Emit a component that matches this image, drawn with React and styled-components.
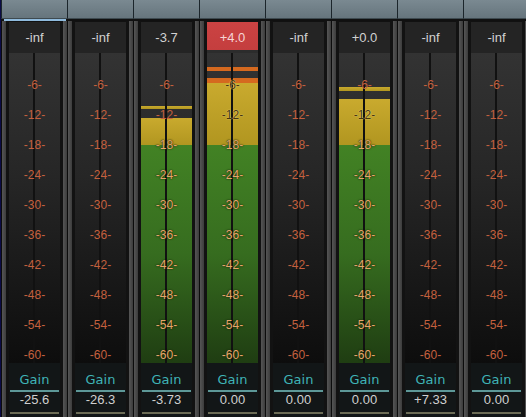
import React from "react";
import styled, { createGlobalStyle } from "styled-components";

const Global = createGlobalStyle`
  html, body { margin: 0; padding: 0; background: #0b0b46; overflow: hidden; }
  #root { width: 526px; height: 417px; }
`;

const Page = styled.div`
  display: flex;
  width: 526px;
  height: 417px;
  overflow: hidden;
  padding-left: 1px;
  box-sizing: border-box;
  background: #0b0b46;
`;

const Column = styled.div`
  flex: 0 0 66px;
  display: flex;
  flex-direction: column;
  background: #0f0f0f;
`;

const Header = styled.div`
  height: 19px;
  background: linear-gradient(#7a8991, #66757d);
  border-left: 1px solid #1b252b;
  border-bottom: 1px solid #3e4a50;
  box-sizing: border-box;
`;

const SelBar = styled.div`
  height: 2px;
  padding: 0 1px 0 3px;
  background: #101010;
  &::after {
    content: "";
    display: block;
    height: 2px;
    background: ${(p) => (p.$on ? "#8fbadc" : "transparent")};
  }
`;

const Body = styled.div`
  flex: 1;
  display: flex;
  min-height: 0;
`;

const Divider = styled.div`
  flex: 0 0 1px;
  background: #0c0c0c;
`;

const GrayStrip = styled.div`
  flex: 0 0 4px;
  background: linear-gradient(90deg, #555 0, #494949 50%, #3c3c3c 100%);
`;

const DarkStrip = styled.div`
  flex: 0 0 3px;
  background: #121212;
`;

const Panel = styled.div`
  flex: 0 0 51px;
  display: flex;
  flex-direction: column;
  padding-top: 1px;
  background: #111;
`;

const ValueBox = styled.div`
  height: 31px;
  display: flex;
  align-items: flex-start;
  justify-content: center;
  padding-top: 8px;
  box-sizing: border-box;
  font: 13px "Liberation Sans", Arial, sans-serif;
  color: ${(p) => (p.$clip ? "#f6d4d4" : "#d2d2d2")};
  background: ${(p) =>
    p.$clip
      ? "linear-gradient(#cb4343 0, #c43e3e 28px, #2c2c2c 28px)"
      : "#242424"};
`;

const Meter = styled.div`
  position: relative;
  height: 310px;
  overflow: hidden;
  background: linear-gradient(#333333, #262626 40%, #0d0d0d);
`;

const fills = {
  yellow: "linear-gradient(#c9aa2e, #b19620)",
  orange: "#d5691f",
  green: "linear-gradient(#428224, #366c1f 50%, #1f3d12)",
};

const Fill = styled.div`
  position: absolute;
  left: 0;
  right: 0;
  background: ${(p) => fills[p.$kind]};
`;

const CenterLine = styled.div`
  position: absolute;
  top: 0;
  bottom: 0;
  left: 24px;
  width: 2px;
  background: #111;
`;

const Scale = styled.div`
  position: relative;
  z-index: 1;
  padding-top: 17px;
  display: flex;
  flex-direction: column;
`;

const labelColors = {
  none: ["#c4603e", "none"],
  yellow: ["#46340c", "0 0 1px #f0d878, 0 0 1px #f0d878"],
  orange: ["#46340c", "0 0 1px #f0b060"],
  green: ["#e6a66c", "0 0 2px #1a2a0a, 0 0 1px #1a2a0a"],
};

const Tick = styled.div`
  height: 30px;
  text-align: center;
  font: 12px/30px "Liberation Sans", Arial, sans-serif;
  color: ${(p) => labelColors[p.$on][0]};
  text-shadow: ${(p) => labelColors[p.$on][1]};
`;

const Bottom = styled.div`
  flex: 1;
  display: flex;
  flex-direction: column;
  padding: 9px 1px 0;
  background: #121617;
`;

const GainLabel = styled.div`
  height: 16px;
  line-height: 16px;
  text-align: center;
  font: 13px "DejaVu Sans", Verdana, sans-serif;
  color: #3fb3b6;
`;

const Rule = styled.div`
  height: 2px;
  margin-top: 2px;
  background: ${(p) => p.$c};
`;

const GainValue = styled.div`
  height: 20px;
  line-height: 20px;
  text-align: center;
  font: 13px "Liberation Sans", Arial, sans-serif;
  color: #d0d0d0;
  & + ${Rule} { margin-top: 0; }
`;

const channels = [
  { peak: "-inf", gain: "-25.6", selected: true, segs: [] },
  { peak: "-inf", gain: "-26.3", segs: [] },
  {
    peak: "-3.7",
    gain: "-3.73",
    segs: [
      [53, 3, "yellow"],
      [65, 27, "yellow"],
      [92, 218, "green"],
    ],
  },
  {
    peak: "+4.0",
    clip: true,
    gain: "0.00",
    segs: [
      [14, 4, "orange"],
      [25, 5, "orange"],
      [30, 62, "yellow"],
      [92, 218, "green"],
    ],
  },
  { peak: "-inf", gain: "0.00", segs: [] },
  {
    peak: "+0.0",
    gain: "0.00",
    segs: [
      [34, 4, "yellow"],
      [46, 46, "yellow"],
      [92, 218, "green"],
    ],
  },
  { peak: "-inf", gain: "+7.33", segs: [] },
  { peak: "-inf", gain: "0.00", segs: [] },
];

const ticks = [-6, -12, -18, -24, -30, -36, -42, -48, -54, -60];

function coverAt(segs, y) {
  for (const [top, h, kind] of segs) {
    if (y >= top && y < top + h) return kind;
  }
  return "none";
}

function Channel({ ch }) {
  return (
    <Column>
      <Header />
      <SelBar $on={ch.selected} />
      <Body>
        <Divider />
        <GrayStrip />
        <DarkStrip />
        <Panel>
          <ValueBox $clip={ch.clip}>{ch.peak}</ValueBox>
          <Meter>
            {ch.segs.map(([top, h, kind], i) => (
              <Fill key={i} $kind={kind} style={{ top, height: h }} />
            ))}
            <CenterLine />
            <Scale>
              {ticks.map((t, i) => (
                <Tick key={t} $on={coverAt(ch.segs, 32 + 30 * i)}>
                  {`${t}-`}
                </Tick>
              ))}
            </Scale>
          </Meter>
          <Bottom>
            <GainLabel>Gain</GainLabel>
            <Rule $c="#5d9898" />
            <GainValue>{ch.gain}</GainValue>
            <Rule $c="#6c6c56" />
          </Bottom>
        </Panel>
        <DarkStrip />
        <GrayStrip />
      </Body>
    </Column>
  );
}

export default function App() {
  return (
    <>
      <Global />
      <Page>
        {channels.map((ch, i) => (
          <Channel key={i} ch={ch} />
        ))}
      </Page>
    </>
  );
}
